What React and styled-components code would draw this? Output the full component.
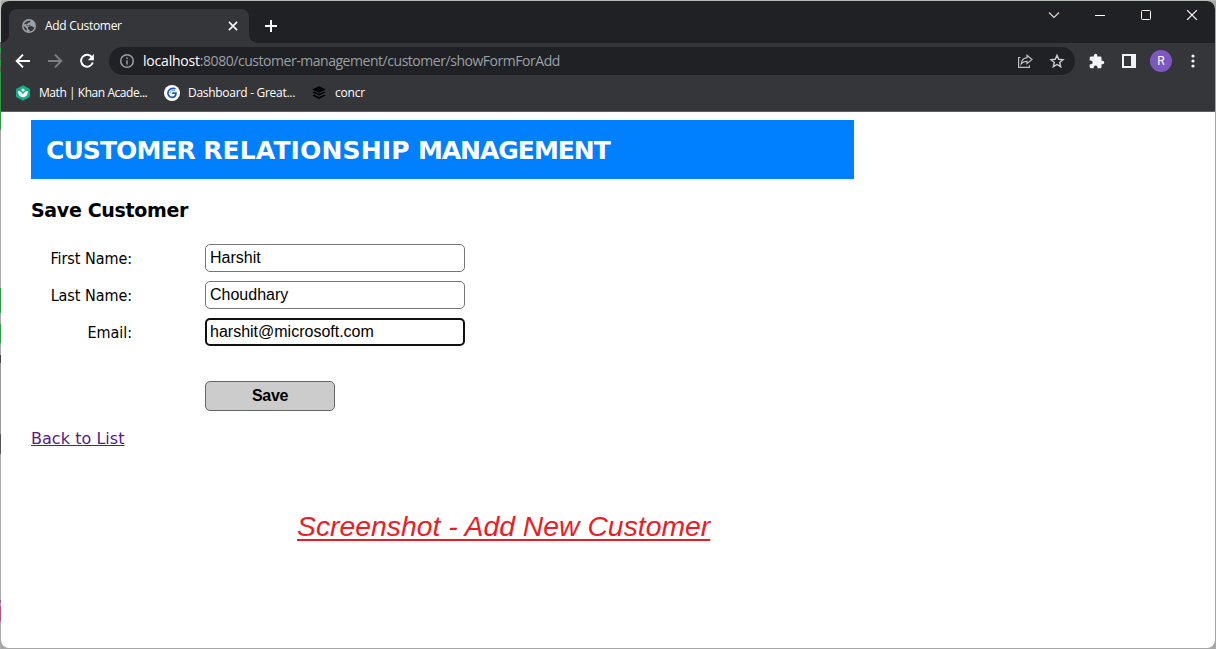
import React from "react";
import styled, { createGlobalStyle } from "styled-components";

const GlobalStyle = createGlobalStyle`
  *, *::before, *::after { box-sizing: border-box; }
  html, body { margin: 0; padding: 0; overflow: hidden; }
  svg { display: block; flex: none; }
`;

const ui = `"Open Sans", "Noto Sans", sans-serif`;
const verdana = `"DejaVu Sans", sans-serif`;
const arial = `"Liberation Sans", sans-serif`;

const Desktop = styled.div`
  width: 1216px;
  height: 649px;
  padding: 1px;
  background:
    linear-gradient(
      to bottom,
      #c3c9c5 0 42px, #56695b 42px 48px, #2f9a45 48px 54px, #56695b 54px 60px,
      #2f9a45 60px 66px, #56695b 66px 72px, #2f9a45 72px 130px, #aaa 130px 288px,
      #2f9a45 288px 313px, #aaa 313px 324px, #2f9a45 324px 343px, #aaa 343px 355px,
      #444 355px 363px, #999 363px 434px, #555 434px 454px, #aaa 454px 600px,
      #b0578a 600px 603px, #aaa 603px 606px, #b0578a 606px 621px, #aaa 621px 649px
    ) left / 1px 100% no-repeat,
    linear-gradient(#b4bab6, #b4bab6) top / 100% 1px no-repeat,
    #a6a6a6;
`;

const Window = styled.div`
  display: flex;
  flex-direction: column;
  width: 1214px;
  height: 647px;
  overflow: hidden;
  border-radius: 8px;
  background: #fff;
`;

const TabStrip = styled.div`
  display: flex;
  justify-content: space-between;
  height: 42px;
  padding-left: 8px;
  background: #202124;
`;

const Tabs = styled.div`
  display: flex;
  align-items: flex-end;
`;

const Tab = styled.div`
  position: relative;
  display: flex;
  align-items: center;
  width: 240px;
  height: 34px;
  padding: 0 11px 0 13px;
  border-radius: 8px 8px 0 0;
  background: #35363a;

  &::before, &::after {
    content: "";
    position: absolute;
    bottom: 0;
    width: 8px;
    height: 8px;
  }
  &::before {
    left: -8px;
    background: radial-gradient(circle at 0 0, #202124 7.5px, #35363a 8px);
  }
  &::after {
    right: -8px;
    background: radial-gradient(circle at 100% 0, #202124 7.5px, #35363a 8px);
  }
`;

const TabTitle = styled.span`
  flex: 1;
  margin-left: 9px;
  font: 12px/16px ${ui};
  letter-spacing: -0.3px;
  color: #fff;
  white-space: nowrap;
`;

const NewTab = styled.div`
  display: flex;
  align-items: center;
  height: 34px;
  margin-left: 15px;
`;

const WindowControls = styled.div`
  display: flex;
  height: 28px;
`;

const Control = styled.div`
  display: flex;
  align-items: center;
  justify-content: center;
  width: 46px;
`;

const Toolbar = styled.div`
  display: flex;
  align-items: center;
  height: 36px;
  padding-left: 13px;
  background: #35363a;
`;

const NavButtons = styled.div`
  display: flex;
  gap: 14px;
  width: 95px;
`;

const AddressBar = styled.div`
  display: flex;
  align-items: center;
  width: 966px;
  height: 28px;
  padding: 0 10px;
  border-radius: 14px;
  background: #202124;
`;

const Url = styled.span`
  flex: 1;
  margin-left: 8px;
  font: 14px/20px ${ui};
  letter-spacing: -0.46px;
  color: #9aa0a6;
  white-space: nowrap;

  b { font-weight: 400; letter-spacing: -0.2px; color: #fff; }
`;

const AddressActions = styled.div`
  display: flex;
  gap: 16px;
`;

const ToolbarActions = styled.div`
  display: flex;
  align-items: center;
  margin-left: 6px;
`;

const Slot = styled.div`
  display: flex;
  justify-content: center;
  width: 32px;
`;

const Avatar = styled.div`
  width: 22px;
  height: 22px;
  border-radius: 50%;
  background: #7e57c2;
  color: #fff;
  font: 12px/22px Roboto, sans-serif;
  text-align: center;
`;

const Bookmarks = styled.div`
  display: flex;
  align-items: center;
  height: 33px;
  padding: 0 0 4px 14px;
  border-bottom: 1px solid #5f6064;
  background: #35363a;
`;

const Bookmark = styled.div`
  display: flex;
  align-items: center;
  width: ${(p) => p.$width}px;

  span {
    margin-left: ${(p) => p.$gap || 8}px;
    font: 12px/16px ${ui};
    letter-spacing: ${(p) => p.$spacing || 0}px;
    color: #fff;
    white-space: nowrap;
  }
`;

const Page = styled.main`
  padding: 8px 30px 0;
`;

const Banner = styled.header`
  width: 823px;
  height: 59px;
  padding-left: 15px;
  background: #0080ff;
`;

const BannerTitle = styled.h1`
  margin: 0;
  font: bold 25px/62px ${verdana};
  letter-spacing: -0.52px;
  color: #fff;
  white-space: nowrap;
`;

const Word = styled.span`
  letter-spacing: ${(p) => p.$spacing}px;
`;

const Heading = styled.h2`
  margin: 19px 0 22px;
  font: bold 19px/24px ${verdana};
  letter-spacing: -0.33px;
  color: #000;
`;

const Form = styled.div`
  display: grid;
  grid-template-columns: 101px 260px;
  column-gap: 73px;
  row-gap: 9px;
`;

const Label = styled.label`
  height: 28px;
  padding-top: 1px;
  font: 16px/28px "DejaVu Sans Condensed", "DejaVu Sans", sans-serif;
  font-stretch: condensed;
  letter-spacing: -0.05px;
  text-align: right;
  white-space: nowrap;
  color: #000;
`;

const Input = styled.input`
  width: 260px;
  height: 28px;
  padding: 0 ${(p) => (p.$focused ? 3 : 4)}px 1px;
  border: ${(p) => (p.$focused ? "2px solid #101010" : "1px solid #767676")};
  border-radius: 5px;
  outline: none;
  background: #fff;
  color: #000;
  font: 16px ${arial};
`;

const SaveButton = styled.button`
  grid-column: 2;
  width: 130px;
  height: 30px;
  margin-top: 26px;
  padding: 0;
  border: 1px solid #666;
  border-radius: 5px;
  background: #ccc;
  color: #000;
  font: bold 16px/26px ${arial};
  letter-spacing: -0.3px;
`;

const BackLink = styled.a`
  display: block;
  width: max-content;
  margin-top: 18px;
  font: 16px/20px ${verdana};
  letter-spacing: 0.04px;
  color: #551a8b;
  text-decoration: underline;
`;

const Caption = styled.p`
  width: max-content;
  margin: 60px 0 0 266px;
  font: italic 28.35px/34px ${arial};
  color: #ed1c24;
  text-decoration: underline;
  text-decoration-thickness: 2px;
  text-underline-offset: 3px;
  text-decoration-skip-ink: none;
  white-space: nowrap;
`;

const Globe = () => (
  <svg width="14" height="14" viewBox="0 0 14 14">
    <circle cx="7" cy="7" r="7" fill="#9aa0a6" />
    <path
      d="M8.400 1.700C8.600 2.900 8 3.500 7 3.500c-.9 0-1.200.5-1.100 1.200-.9.1-1.500.4-1.500 1.200h3.100c.8 0 1.100.6 1.100 1.300h1.100c.8 0 1.200.5 1.400 1.100h1.300C12 10.600 10 12.300 7.600 12.400v-1.600c-1 0-1.600-.5-1.600-1.400v-.7L1.800 5.800C2.400 3.200 4.900 1.300 8.400 1.700z"
      fill="#35363a"
    />
    <path d="M2 5.300l2.300-.2v1.500h3v1.500H5.800L4.500 9.300 1.600 7z" fill="#9aa0a6" />
    <path d="M1.600 6.700L4.700 9.500v2.400C2.900 11 1.600 9.200 1.600 6.700z" fill="#35363a" />
  </svg>
);

const Cross = ({ size, weight }) => (
  <svg width={size} height={size} viewBox="0 0 10 10" stroke="#fff" strokeWidth={weight} fill="none">
    <path d="M.9.9l8.200 8.200M9.100.9L.9 9.100" />
  </svg>
);

const Arrow = ({ color, flip }) => (
  <svg width="18" height="18" viewBox="0 0 18 18" fill="none" stroke={color} strokeWidth="1.900">
    <path d={flip ? "M2 9h13M9 2.700L15.300 9 9 15.300" : "M16 9H3M9 2.700L2.700 9 9 15.300"} />
  </svg>
);

const Reload = () => (
  <svg width="18" height="18" viewBox="0 0 18 18">
    <path d="M14.100 5.400A6 6 0 1 0 14.800 10.500" fill="none" stroke="#fff" strokeWidth="1.900" />
    <path d="M15.900 2v6.200H9.700z" fill="#fff" />
  </svg>
);

const Info = () => (
  <svg width="16" height="16" viewBox="0 0 16 16" fill="none" stroke="#9aa0a6" strokeWidth="1.500">
    <circle cx="8" cy="8" r="6.300" />
    <path d="M8 7.200v4.200M8 4.600v1.500" />
  </svg>
);

const Share = () => (
  <svg width="16" height="16" viewBox="0 0 16 16" fill="none" stroke="#bdc1c6" strokeWidth="1.200">
    <path d="M3.500 4.500H1.600v9.900h10.800v-2.200" />
    <path d="M10 2.300l5 4.200-5 4.100V8.300C7.400 8.200 5.600 9 4.200 10.900 4.500 7.600 6.500 5 10 4.600z" />
  </svg>
);

const Star = () => (
  <svg width="16" height="16" viewBox="0 0 16 16" fill="none" stroke="#c8cbcf" strokeWidth="1.400">
    <path d="M8 2.300l1.700 4 4.300.4-3.300 2.800 1 4.200L8 11.500l-3.700 2.200 1-4.200L2 6.700l4.300-.4z" />
  </svg>
);

const Puzzle = () => (
  <svg width="16" height="16" viewBox="1 0 23 23" fill="#f1f3f4">
    <path d="M20.500 11H19V7a2 2 0 0 0-2-2h-4V3.500a2.500 2.500 0 0 0-5 0V5H4a2 2 0 0 0-2 2v3.800h1.500a2.700 2.700 0 0 1 0 5.400H2V20a2 2 0 0 0 2 2h3.800v-1.500a2.700 2.700 0 0 1 5.400 0V22H17a2 2 0 0 0 2-2v-4h1.500a2.500 2.500 0 0 0 0-5z" />
  </svg>
);

const SidePanel = () => (
  <svg width="14" height="14" viewBox="0 0 14 14">
    <path d="M0 0h14v14H0zM2 2v10h7V2z" fill="#f1f3f4" fillRule="evenodd" />
  </svg>
);

const Dots = () => (
  <svg width="4" height="14" viewBox="0 0 4 14" fill="#f1f3f4">
    <circle cx="2" cy="2" r="1.600" />
    <circle cx="2" cy="7" r="1.600" />
    <circle cx="2" cy="12" r="1.600" />
  </svg>
);

const Khan = () => (
  <svg width="16" height="16" viewBox="0 0 16 16">
    <path d="M8 .3l6.500 3.500q.5.300.5.900v6.600q0 .6-.5.900L8 15.700l-6.500-3.500q-.5-.3-.5-.9V4.700q0-.6.500-.9z" fill="#12b08c" />
    <circle cx="8" cy="5" r="1.600" fill="#fff" />
    <path d="M3 6c2.600.1 4.300 1.500 5 3.700.7-2.200 2.400-3.600 5-3.700 0 3.700-2 6.200-5 6.200S3 9.700 3 6z" fill="#fff" />
  </svg>
);

const GreatLogo = () => (
  <svg width="16" height="16" viewBox="0 0 16 16" fill="none">
    <circle cx="8" cy="8" r="8" fill="#fff" />
    <path d="M11.500 3.700C8 2.500 4 4.300 3.900 8c0 3 2.400 4.600 4.700 4.300 2.200-.3 3.300-1.900 3.300-4.100H8.200" stroke="#1a56b8" strokeWidth="1.700" />
    <path d="M11.300 5.700C9 4.800 6.300 5.700 6.100 8" stroke="#5e9be8" strokeWidth="1" />
  </svg>
);

const Layers = () => (
  <svg width="14" height="14" viewBox="0 0 14 14" fill="#000">
    <path d="M7 .3l6.700 3.200L7 6.700.3 3.500z" />
    <path d="M.3 6.400L2.200 5.500 7 7.800l4.800-2.300 1.900.9L7 9.600z" />
    <path d="M.3 9.600l1.900-.9L7 11l4.800-2.300 1.900.9L7 12.900z" />
  </svg>
);

const fields = [
  { label: "First Name:", value: "Harshit" },
  { label: "Last Name:", value: "Choudhary" },
  { label: "Email:", value: "harshit@microsoft.com", focused: true },
];

export default function App() {
  return (
    <Desktop>
      <GlobalStyle />
      <Window>
        <TabStrip>
          <Tabs>
            <Tab>
              <Globe />
              <TabTitle>Add Customer</TabTitle>
              <Cross size={10} weight={1.5} />
            </Tab>
            <NewTab>
              <svg width="14" height="14" viewBox="0 0 14 14" stroke="#fff" strokeWidth="2">
                <path d="M7 1v12M1 7h12" />
              </svg>
            </NewTab>
          </Tabs>
          <WindowControls>
            <Control>
              <svg width="12" height="8" viewBox="0 0 12 8" fill="none" stroke="#ddd" strokeWidth="1.100">
                <path d="M1 1.500l5 5 5-5" />
              </svg>
            </Control>
            <Control>
              <svg width="10" height="2" viewBox="0 0 10 2"><path d="M0 1h10v1H0z" fill="#fff" /></svg>
            </Control>
            <Control>
              <svg width="10" height="10" viewBox="0 0 10 10" fill="none" stroke="#fff">
                <rect x=".5" y=".5" width="9" height="9" rx="1" />
              </svg>
            </Control>
            <Control>
              <Cross size={12} weight={1} />
            </Control>
          </WindowControls>
        </TabStrip>

        <Toolbar>
          <NavButtons>
            <Arrow color="#fff" />
            <Arrow color="#7d7f83" flip />
            <Reload />
          </NavButtons>
          <AddressBar>
            <Info />
            <Url><b>localhost</b>:8080/customer-management/customer/showFormForAdd</Url>
            <AddressActions>
              <Share />
              <Star />
            </AddressActions>
          </AddressBar>
          <ToolbarActions>
            <Slot><Puzzle /></Slot>
            <Slot><SidePanel /></Slot>
            <Slot><Avatar>R</Avatar></Slot>
            <Slot><Dots /></Slot>
          </ToolbarActions>
        </Toolbar>

        <Bookmarks>
          <Bookmark $width={149} $spacing={-0.45}><Khan /><span>Math | Khan Acade...</span></Bookmark>
          <Bookmark $width={148} $spacing={-0.29}><GreatLogo /><span>Dashboard - Great...</span></Bookmark>
          <Bookmark $width={80} $spacing={-0.2} $gap={9}><Layers /><span>concr</span></Bookmark>
        </Bookmarks>

        <Page>
          <Banner>
            <BannerTitle>
              <Word $spacing={-0.9}>CUSTOMER</Word>{" "}
              <Word $spacing={0.15}>RELATIONSHIP</Word>{" "}
              <Word $spacing={-1.02}>MANAGEMENT</Word>
            </BannerTitle>
          </Banner>
          <Heading>Save Customer</Heading>
          <Form>
            {fields.map((f) => (
              <React.Fragment key={f.label}>
                <Label>{f.label}</Label>
                <Input defaultValue={f.value} $focused={f.focused} spellCheck={false} />
              </React.Fragment>
            ))}
            <SaveButton>Save</SaveButton>
          </Form>
          <BackLink href="#">Back to List</BackLink>
          <Caption>Screenshot - Add New Customer</Caption>
        </Page>
      </Window>
    </Desktop>
  );
}
